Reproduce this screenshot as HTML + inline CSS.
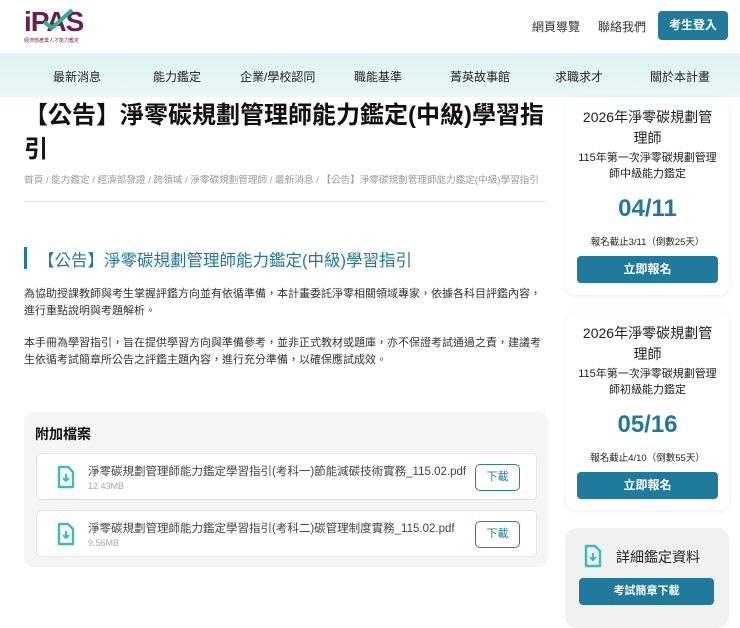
<!DOCTYPE html>
<html><head><meta charset="utf-8"><style>
*{margin:0;padding:0;box-sizing:border-box}
body{width:740px;height:617px;overflow:hidden;background:#fff;font-family:"Liberation Sans","Noto Sans CJK TC",sans-serif;color:#222;position:relative}
.abs{position:absolute}
.hdr a{position:absolute;font-size:12px;color:#333}
.nav{top:53px;left:0;width:740px;height:44px;background:linear-gradient(#e0f2f3,#e9f6f6)}
.nav span{position:absolute;top:15px;font-size:12px;color:#222}
.card{position:absolute;left:566px;width:163px;background:#fff;border-radius:10px;box-shadow:0 1px 6px rgba(0,0,0,.08);text-align:center}
.btn{background:#1f7a9c;color:#fff;border-radius:4px;font-size:12px;font-weight:bold}
.file{position:absolute;left:36px;width:501px;height:47px;background:#fff;border:1px solid #e4e4e4;border-radius:5px}
.file .n{position:absolute;left:51px;top:9px;font-size:11.5px;color:#444;white-space:nowrap}
.file .s{position:absolute;left:51px;top:27px;font-size:9px;color:#aaa}
.file .d{position:absolute;left:438px;top:10px;width:45px;height:27px;border:1px solid #2a7fa0;border-radius:5px;color:#2a7fa0;font-size:11px;text-align:center;line-height:25px}
.file svg{position:absolute;left:20px;top:11px}
.t1{margin-top:10px;font-size:14px;line-height:21px;padding:0 13px}
.t2{font-size:11px;line-height:16px;padding:0 10px;margin-top:1px}
.dt{font-size:24px;font-weight:bold;color:#1f7a9c;margin-top:12px;line-height:30px}
.dl{font-size:9.5px;margin-top:10px}
</style></head><body>
<div class="abs" style="left:24px;top:8px;font-size:28px;font-weight:bold;color:#6b1f4e;letter-spacing:-1px;line-height:28px">iPAS</div>
<svg class="abs" style="left:40px;top:8px" width="36" height="22"><path d="M4 14 L12 20 L32 2" stroke="#2bb39a" stroke-width="4" fill="none"/></svg>
<div class="abs" style="left:24px;top:37px;font-size:5px;color:#6b1f4e">經濟部產業人才能力鑑定</div>
<div class="hdr">
<a style="left:532px;top:18px">網頁導覽</a>
<a style="left:598px;top:18px">聯絡我們</a>
</div>
<div class="abs btn" style="left:658px;top:11px;width:70px;height:29px;line-height:29px;text-align:center;font-size:12px">考生登入</div>
<div class="abs nav">
<span style="left:53px">最新消息</span><span style="left:153px">能力鑑定</span><span style="left:240px">企業/學校認同</span><span style="left:354px">職能基準</span><span style="left:450px">菁英故事館</span><span style="left:555px">求職求才</span><span style="left:650px">關於本計畫</span>
</div>
<div class="abs" style="left:24px;top:99px;width:520px;font-size:24px;font-weight:bold;line-height:34px;color:#111">【公告】淨零碳規劃管理師能力鑑定(中級)學習指引</div>
<div class="abs" style="left:24px;top:172px;font-size:9.6px;color:#999;white-space:nowrap">首頁 / 能力鑑定 / 經濟部發證 / 跨領域 / 淨零碳規劃管理師 / 最新消息 / 【公告】淨零碳規劃管理師能力鑑定(中級)學習指引</div>
<div class="abs" style="left:24px;top:201px;width:523px;height:1px;background:#e6e6e6"></div>
<div class="abs" style="left:24px;top:247px;width:3px;height:22px;background:#1f7a9c"></div>
<div class="abs" style="left:38px;top:247px;font-size:16.5px;color:#1f7a9c">【公告】淨零碳規劃管理師能力鑑定(中級)學習指引</div>
<div class="abs" style="left:24px;top:286px;width:524px;font-size:11px;line-height:17px;color:#333">為協助授課教師與考生掌握評鑑方向並有依循準備，本計畫委託淨零相關領域專家，依據各科目評鑑內容，進行重點說明與考題解析。</div>
<div class="abs" style="left:24px;top:335px;width:524px;font-size:11px;line-height:17px;color:#333">本手冊為學習指引，旨在提供學習方向與準備參考，並非正式教材或題庫，亦不保證考試通過之責，建議考生依循考試簡章所公告之評鑑主題內容，進行充分準備，以確保應試成效。</div>
<div class="abs" style="left:24px;top:412px;width:524px;height:155px;background:#f5f5f5;border-radius:10px"></div>
<div class="abs" style="left:35px;top:424px;font-size:14px;font-weight:bold;color:#111">附加檔案</div>
<div class="file" style="top:453px"><svg width="18" height="24"><path d="M2 2 H11 L16 7 V22 H2 Z" fill="none" stroke="#3dbdb8" stroke-width="2.4" stroke-linejoin="round"/><path d="M9 9 V16 M6 13 L9 16 L12 13" stroke="#3dbdb8" stroke-width="2" fill="none"/></svg><div class="n">淨零碳規劃管理師能力鑑定學習指引(考科一)節能減碳技術實務_115.02.pdf</div><div class="s">12.43MB</div><div class="d">下載</div></div>
<div class="file" style="top:510px"><svg width="18" height="24"><path d="M2 2 H11 L16 7 V22 H2 Z" fill="none" stroke="#3dbdb8" stroke-width="2.4" stroke-linejoin="round"/><path d="M9 9 V16 M6 13 L9 16 L12 13" stroke="#3dbdb8" stroke-width="2" fill="none"/></svg><div class="n">淨零碳規劃管理師能力鑑定學習指引(考科二)碳管理制度實務_115.02.pdf</div><div class="s">9.56MB</div><div class="d">下載</div></div>

<div class="card" style="top:97px;height:198px">
<div class="t1">2026年淨零碳規劃管理師</div>
<div class="t2">115年第一次淨零碳規劃管理師中級能力鑑定</div>
<div class="dt">04/11</div>
<div class="dl">報名截止3/11（倒數25天）</div>
<div class="btn" style="margin:8px 11px 0;height:27px;line-height:27px">立即報名</div>
</div>
<div class="card" style="top:313px;height:197px">
<div class="t1">2026年淨零碳規劃管理師</div>
<div class="t2">115年第一次淨零碳規劃管理師初級能力鑑定</div>
<div class="dt">05/16</div>
<div class="dl">報名截止4/10（倒數55天）</div>
<div class="btn" style="margin:8px 11px 0;height:27px;line-height:27px">立即報名</div>
</div>
<div class="abs" style="left:565px;top:528px;width:164px;height:100px;background:#f1f1f1;border-radius:12px">
<svg class="abs" style="left:19px;top:16px" width="18" height="24"><path d="M2 2 H11 L16 7 V22 H2 Z" fill="none" stroke="#3dbdb8" stroke-width="2.4" stroke-linejoin="round"/><path d="M9 9 V16 M6 13 L9 16 L12 13" stroke="#3dbdb8" stroke-width="2" fill="none"/></svg>
<div class="abs" style="left:51px;top:19px;font-size:14px">詳細鑑定資料</div>
<div class="abs btn" style="left:14px;top:50px;width:135px;height:27px;line-height:27px;text-align:center;font-size:11px">考試簡章下載</div>
</div>
</body></html>
